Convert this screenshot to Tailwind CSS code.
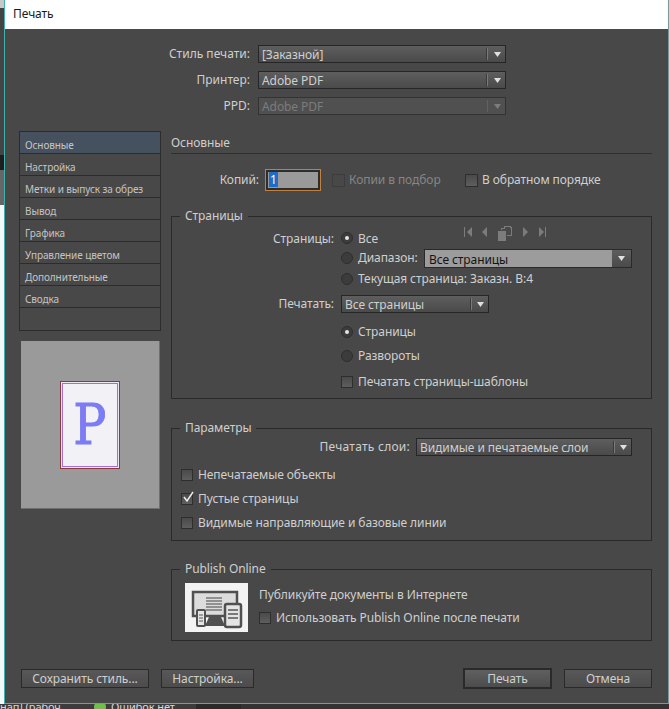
<!DOCTYPE html>
<html lang="ru">
<head>
<meta charset="UTF-8">
<title>Печать</title>
<script src="https://cdn.jsdelivr.net/npm/@tailwindcss/browser@4"></script>
</head>
<body class="bg-[#333333]">
<div class="w-[669px] h-[709px] flex flex-col overflow-hidden font-['Noto_Sans',sans-serif] text-[12px] leading-[16px] tracking-[-0.08px] text-[#cfcfcf]">
  <div class="h-[704px] flex">
    <!-- window behind the dialog -->
    <div class="w-[4px] flex flex-col">
      <div class="h-[8px] bg-[#c8c8c8]"></div>
      <div class="h-[147px] bg-[#444444]"></div>
      <div class="h-[15px] bg-[#1e1e1e]"></div>
      <div class="h-[35px] bg-[#666666]"></div>
      <div class="flex-1 bg-[#f4f8f8]"></div>
    </div>
    <div class="w-[665px] flex flex-col border border-t-0 border-[#3fb3ac] bg-[#484848]">
      <div class="h-[29px] bg-white pl-[8px] pt-[6px] text-[#1a1a1a]">Печать</div>

      <!-- top selects -->
      <div class="pt-[16px] flex flex-col gap-[8px] pl-[253px]">
        <div class="w-[248px] h-[18px] relative flex items-center pl-[3px] border border-[#262626] bg-gradient-to-b from-[#5e5e5e] to-[#4a4a4a]">
          <span class="absolute right-[255px] whitespace-nowrap tracking-normal">Стиль печати:</span>
          <span class="flex-1 pt-[2px]">[Заказной]</span>
          <span class="h-[12px] w-[2px] border-l border-r border-l-[#3a3a3a] border-r-[#7a7a7a] mr-[6px]"></span>
          <svg class="w-[7px] h-[5px] mr-[4px]" viewBox="0 0 7 5"><path d="M0 0H7L3.5 5Z" fill="#e0e0e0"/></svg>
        </div>
        <div class="w-[248px] h-[18px] relative flex items-center pl-[3px] border border-[#262626] bg-gradient-to-b from-[#5e5e5e] to-[#4a4a4a]">
          <span class="absolute right-[255px] whitespace-nowrap tracking-normal">Принтер:</span>
          <span class="flex-1 pt-[2px]">Adobe PDF</span>
          <span class="h-[12px] w-[2px] border-l border-r border-l-[#3a3a3a] border-r-[#7a7a7a] mr-[6px]"></span>
          <svg class="w-[7px] h-[5px] mr-[4px]" viewBox="0 0 7 5"><path d="M0 0H7L3.5 5Z" fill="#e0e0e0"/></svg>
        </div>
        <div class="w-[248px] h-[18px] relative flex items-center pl-[3px] border border-[#333333] bg-[#505050]">
          <span class="absolute right-[255px] whitespace-nowrap tracking-normal">PPD:</span>
          <span class="flex-1 pt-[2px] text-[#7c7c7c]">Adobe PDF</span>
          <span class="h-[12px] w-[2px] border-r border-r-[#626262] mr-[6px]"></span>
          <svg class="w-[7px] h-[5px] mr-[4px]" viewBox="0 0 7 5"><path d="M0 0H7L3.5 5Z" fill="#7c7c7c"/></svg>
        </div>
      </div>

      <div class="flex mt-[16px] pl-[14px]">
        <!-- left column -->
        <div class="w-[142px] shrink-0">
          <div class="h-[200px] border border-[#2c2c2c] text-[10px] leading-[14px] tracking-[-0.1px] text-[#c4c4c4]">
            <div class="h-[22px] pl-[5px] pt-[6px] bg-[#46515f] border-b border-[#2c2c2c]">Основные</div>
            <div class="h-[22px] pl-[5px] pt-[6px] border-b border-[#2c2c2c]">Настройка</div>
            <div class="h-[22px] pl-[5px] pt-[6px] border-b border-[#2c2c2c]">Метки и выпуск за обрез</div>
            <div class="h-[22px] pl-[5px] pt-[6px] border-b border-[#2c2c2c]">Вывод</div>
            <div class="h-[22px] pl-[5px] pt-[6px] border-b border-[#2c2c2c]">Графика</div>
            <div class="h-[22px] pl-[5px] pt-[6px] border-b border-[#2c2c2c]">Управление цветом</div>
            <div class="h-[22px] pl-[5px] pt-[6px] border-b border-[#2c2c2c]">Дополнительные</div>
            <div class="h-[22px] pl-[5px] pt-[6px] border-b border-[#2c2c2c]">Сводка</div>
          </div>
          <div class="mt-[10px] ml-[2px] w-[139px] h-[168px] bg-[#9a9a9a] border-b border-r border-[#6e6e6e] flex items-center justify-center">
            <div class="w-[60px] h-[88px] border border-[#8e3a3a] p-px bg-[#f0e6f4]">
              <div class="w-full h-full border border-[#a070d8] bg-[#f2f2f6] flex items-center justify-center">
                <span class="font-['DejaVu_Serif',serif] text-[56px] leading-none tracking-normal text-[#7c7cf4] scale-x-[0.88] [-webkit-text-stroke:1px_#7c7cf4]">P</span>
              </div>
            </div>
          </div>
        </div>

        <!-- right column -->
        <div class="ml-[10px] w-[481px]">
          <div class="h-[23px] pt-[4px] border-b border-[#2f2f2f]">Основные</div>
          <div class="flex items-center h-[22px] mt-[15px]">
            <span class="w-[88px] text-right">Копий:</span>
            <div class="ml-[6px] w-[56px] h-[22px] p-[2px] border border-[#c08040] bg-[#2e2e2e]">
              <div class="h-full bg-[#9a9a9a] pl-px"><span class="inline-block h-[15px] leading-[15px] bg-[#1c6fc8] text-white px-px">1</span></div>
            </div>
            <span class="ml-[11px] w-[13px] h-[13px] border border-[#3c3c3c] bg-[#484848]"></span>
            <span class="ml-[4px] w-[116px] text-[#868686]">Копии в подбор</span>
            <span class="w-[13px] h-[13px] border border-[#2e2e2e] bg-gradient-to-b from-[#4a4a4a] to-[#5e5e5e]"></span>
            <span class="ml-[4px]">В обратном порядке</span>
          </div>

          <!-- Страницы -->
          <fieldset class="mt-[18px] h-[190px] border border-[#2a2a2a]">
            <legend class="ml-[8px] px-[5px] leading-[14px]">Страницы</legend>
            <div class="flex h-[20px] items-center mt-[5px]">
              <span class="w-[162px] text-right pt-[2px]">Страницы:</span>
              <span class="ml-[7px] w-[12px] h-[12px] rounded-full border border-[#2e2e2e] bg-[#3c3c3c] flex items-center justify-center"><span class="w-[4px] h-[4px] rounded-full bg-[#e6e6e6]"></span></span>
              <span class="ml-[5px] w-[106px] pt-[2px]">Все</span>
              <svg class="w-[84px] h-[17px] -mt-[9px]" viewBox="0 0 84 17" fill="#7c7c7c">
                <path d="M0 2H1V12H0ZM8 2V12L3 7Z"/>
                <path d="M23 2V12L18 7Z"/>
                <path d="M34 6H42V16H34Z"/>
                <path d="M37 3H41V4H38V5H37ZM40 1H47V2H41V3H40ZM46 2H48V11H43V10H47V3H46Z"/>
                <path d="M59 2V12L64 7Z"/>
                <path d="M75 2V12L80 7ZM81 2H82V12H81Z"/>
              </svg>
            </div>
            <div class="flex h-[20px] items-center">
              <span class="ml-[169px] w-[12px] h-[12px] rounded-full border border-[#2e2e2e] bg-[#3c3c3c]"></span>
              <span class="ml-[5px] w-[66px]">Диапазон:</span>
              <div class="w-[208px] h-[19px] flex border border-[#2a2a2a]">
                <span class="flex-1 bg-[#9c9c9c] text-[#141414] pl-[4px] pt-px leading-[17px]">Все страницы</span>
                <span class="w-[19px] bg-gradient-to-b from-[#5e5e5e] to-[#4a4a4a] flex items-center justify-center"><svg class="w-[7px] h-[5px]" viewBox="0 0 7 5"><path d="M0 0H7L3.5 5Z" fill="#e0e0e0"/></svg></span>
              </div>
            </div>
            <div class="flex h-[20px] items-center mt-px">
              <span class="ml-[169px] w-[12px] h-[12px] rounded-full border border-[#2e2e2e] bg-[#3c3c3c]"></span>
              <span class="ml-[5px]">Текущая страница: Заказн. В:4</span>
            </div>
            <div class="flex h-[18px] items-center mt-[6px]">
              <span class="w-[162px] text-right">Печатать:</span>
              <div class="ml-[7px] w-[148px] h-[18px] flex items-center pl-[3px] border border-[#262626] bg-gradient-to-b from-[#5e5e5e] to-[#4a4a4a]">
                <span class="flex-1 pt-[2px]">Все страницы</span>
                <span class="h-[12px] w-[2px] border-l border-r border-l-[#3a3a3a] border-r-[#7a7a7a] mr-[5px]"></span>
                <svg class="w-[7px] h-[5px] mr-[4px]" viewBox="0 0 7 5"><path d="M0 0H7L3.5 5Z" fill="#e0e0e0"/></svg>
              </div>
            </div>
            <div class="flex h-[20px] items-center mt-[9px] pl-[169px]">
              <span class="w-[12px] h-[12px] rounded-full border border-[#2e2e2e] bg-[#3c3c3c] flex items-center justify-center"><span class="w-[4px] h-[4px] rounded-full bg-[#e6e6e6]"></span></span>
              <span class="ml-[5px]">Страницы</span>
            </div>
            <div class="flex h-[20px] items-center mt-[4px] pl-[169px]">
              <span class="w-[12px] h-[12px] rounded-full border border-[#2e2e2e] bg-[#3c3c3c]"></span>
              <span class="ml-[5px]">Развороты</span>
            </div>
            <div class="flex h-[20px] items-center mt-[6px] pl-[169px]">
              <span class="w-[12px] h-[12px] border border-[#2e2e2e] bg-gradient-to-b from-[#4a4a4a] to-[#5e5e5e]"></span>
              <span class="ml-[5px]">Печатать страницы-шаблоны</span>
            </div>
          </fieldset>

          <!-- Параметры -->
          <fieldset class="mt-[22px] h-[120px] border border-[#2a2a2a]">
            <legend class="ml-[8px] px-[5px] leading-[14px]">Параметры</legend>
            <div class="flex h-[18px] items-center mt-[3px]">
              <span class="w-[238px] text-right tracking-[0.25px]">Печатать слои:</span>
              <div class="ml-[6px] w-[216px] h-[18px] flex items-center pl-[3px] border border-[#262626] bg-gradient-to-b from-[#5e5e5e] to-[#4a4a4a]">
                <span class="flex-1 pt-[2px]">Видимые и печатаемые слои</span>
                <span class="h-[12px] w-[2px] border-l border-r border-l-[#3a3a3a] border-r-[#7a7a7a] mr-[5px]"></span>
                <svg class="w-[7px] h-[5px] mr-[4px]" viewBox="0 0 7 5"><path d="M0 0H7L3.5 5Z" fill="#e0e0e0"/></svg>
              </div>
            </div>
            <div class="flex h-[20px] items-center mt-[9px] pl-[9px]">
              <span class="w-[12px] h-[12px] border border-[#2e2e2e] bg-gradient-to-b from-[#4a4a4a] to-[#5e5e5e]"></span>
              <span class="ml-[5px]">Непечатаемые объекты</span>
            </div>
            <div class="flex h-[20px] items-center mt-[4px] pl-[9px]">
              <span class="w-[12px] h-[12px] border border-[#2e2e2e] bg-gradient-to-b from-[#4a4a4a] to-[#5e5e5e] overflow-visible"><svg class="w-[12px] h-[12px] -mt-[3px]" viewBox="0 0 12 12"><path d="M2 6L5 10L11 1" fill="none" stroke="#ececec" stroke-width="1.5"/></svg></span>
              <span class="ml-[5px]">Пустые страницы</span>
            </div>
            <div class="flex h-[20px] items-center mt-[4px] pl-[9px]">
              <span class="w-[12px] h-[12px] border border-[#2e2e2e] bg-gradient-to-b from-[#4a4a4a] to-[#5e5e5e]"></span>
              <span class="ml-[5px]">Видимые направляющие и базовые линии</span>
            </div>
          </fieldset>

          <!-- Publish Online -->
          <fieldset class="mt-[21px] h-[79px] border border-[#2a2a2a]">
            <legend class="ml-[8px] px-[5px] leading-[14px]">Publish Online</legend>
            <div class="flex mt-[7px] pl-[13px]">
              <svg class="w-[63px] h-[49px] bg-[#f3f3f3]" viewBox="0 0 63 49">
                <path d="M8 9H52V33H8Z" fill="#dcdcdc" stroke="#505050" stroke-width="2.5"/>
                <path d="M21 15H37M21 18H37M21 21H37M21 24H37M21 27H37" stroke="#777777" stroke-width="1.4"/>
                <path d="M24 34H36L40 43H20Z" fill="#505050"/>
                <rect x="40" y="21" width="16" height="23" rx="2" fill="#e4e4e4" stroke="#505050" stroke-width="2.5"/>
                <path d="M43 27H53M43 31H53M43 35H53" stroke="#555555" stroke-width="1.3"/>
                <rect x="12" y="27" width="8" height="16" rx="1" fill="#e4e4e4" stroke="#505050" stroke-width="2"/>
                <path d="M14 32H18M14 35H18M14 38H18" stroke="#555555" stroke-width="1.2"/>
              </svg>
              <div class="ml-[11px]">
                <div class="h-[16px] mt-[4px]">Публикуйте документы в Интернете</div>
                <div class="flex items-center h-[20px] mt-[5px]">
                  <span class="w-[12px] h-[12px] border border-[#2e2e2e] bg-gradient-to-b from-[#4a4a4a] to-[#5e5e5e]"></span>
                  <span class="ml-[5px]">Использовать Publish Online после печати</span>
                </div>
              </div>
            </div>
          </fieldset>
        </div>
      </div>

      <!-- bottom buttons -->
      <div class="flex items-center mt-[27px] pl-[16px] pr-[16px]">
        <button class="w-[128px] h-[19px] border border-[#2a2a2a] bg-gradient-to-b from-[#585858] to-[#4c4c4c] leading-[17px]">Сохранить стиль...</button>
        <button class="ml-[12px] w-[93px] h-[19px] border border-[#2a2a2a] bg-gradient-to-b from-[#585858] to-[#4c4c4c] leading-[17px]">Настройка...</button>
        <button class="ml-auto w-[89px] h-[21px] border-2 border-[#2a2a2a] bg-gradient-to-b from-[#606060] to-[#4c4c4c] leading-[17px]">Печать</button>
        <button class="ml-[12px] w-[88px] h-[19px] border border-[#2a2a2a] bg-gradient-to-b from-[#585858] to-[#4c4c4c] leading-[17px]">Отмена</button>
      </div>
    </div>
  </div>
  <!-- status bar behind the dialog, only its top edge shows -->
  <div class="h-[5px] flex bg-[#3c3c3c] overflow-hidden text-[11px] leading-[11px] text-[#d8d8d8]">
    <span class="w-[94px] -mt-[3px] whitespace-nowrap">нап] (рабоч</span>
    <span class="w-[12px] h-[12px] -mt-[3px] rounded-full bg-[#6fc04a]"></span>
    <span class="ml-[5px] w-[85px] -mt-[3px] whitespace-nowrap">Ошибок нет</span>
    <span class="w-[45px] bg-[#2a2a2a]"></span>
    <span class="flex-1 bg-[#333333]"></span>
  </div>
</div>
</body>
</html>
